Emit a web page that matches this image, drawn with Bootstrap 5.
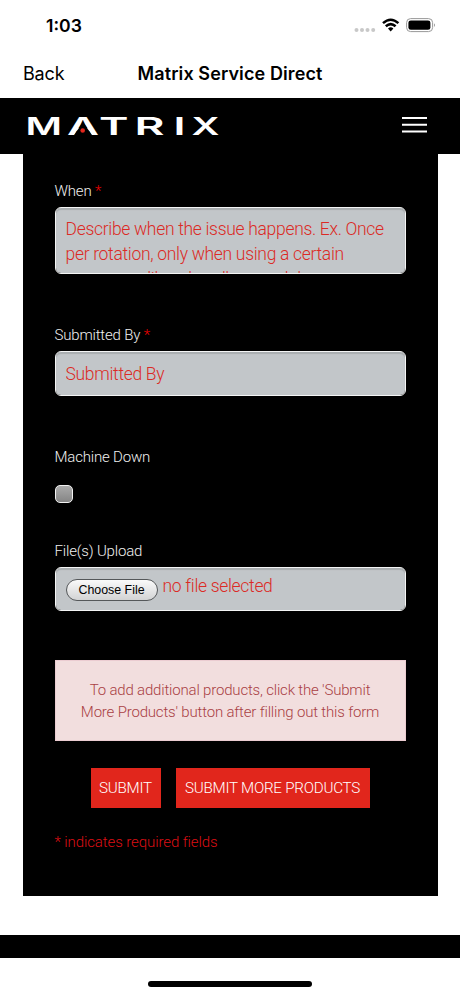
<!DOCTYPE html>
<html lang="en">

<head>
  <meta charset="utf-8">
  <meta name="viewport" content="width=device-width, initial-scale=1">
  <title>Matrix Service Direct</title>

  <!--Bootstrap CSS Link-->
  <link href="https://cdn.jsdelivr.net/npm/bootstrap@5.3.0/dist/css/bootstrap.min.css" rel="stylesheet">

  <style>
    body {
      font-family: Roboto, "Liberation Sans", sans-serif;
      font-weight: 300;
      font-size: 15px;
      line-height: 22px;
      letter-spacing: -0.18px;
      height: 996px;
      overflow: hidden;
      background-color: #fff;
    }

    .status-bar {
      height: 50px;
      padding: 2px 24px 0 46px;
      font: 600 17.6px/1 Inter, sans-serif;
      letter-spacing: 0;
      color: #000;
    }

    .title-bar {
      display: grid;
      grid-template-columns: 1fr auto 1fr;
      height: 48px;
      padding: 0 23px;
      font: 400 18px/1 Inter, sans-serif;
      color: #000;
    }

    .title-bar h1 {
      font-size: 18px;
      font-weight: 600;
      letter-spacing: 0.1px;
    }

    .site-nav {
      height: 55.5px;
      padding: 0 33px 0 25px;
      background-color: #000;
    }

    .brand-text {
      font-family: Inter, sans-serif;
      font-weight: 600;
      font-size: 24px;
      letter-spacing: 0;
    }

    .form-panel {
      width: 415px;
      height: 742px;
      margin: 0 auto 0 22.5px;
      padding: 26.5px 32px 0;
      background-color: #000;
      color: #f0f0f0;
    }

    .form-panel .form-label {
      display: block;
      height: 22px;
      margin: 0 0 5px;
    }

    .required {
      color: #f00000;
    }

    .service-input,
    .service-input:focus {
      padding: 9px 10px;
      border: 1.5px solid #f4f5f5;
      border-radius: 6px;
      background-color: #c2c6c9;
      box-shadow: inset 0 2px 1px #a9adb0;
      color: #dc2a25;
      font-weight: 300;
      font-size: 17.5px;
      line-height: 24.8px;
      letter-spacing: -0.31px;
    }

    .service-input::placeholder {
      color: #dc2a25;
      opacity: 1;
    }

    #when {
      height: 67px;
      margin-bottom: 50px;
      padding-right: 0;
      line-height: 25.2px;
      resize: none;
      overflow: hidden;
    }

    #submitted-by {
      height: 45px;
      margin-bottom: 50px;
    }

    .down-check {
      display: block;
      appearance: none;
      width: 18px;
      height: 18px;
      margin: 17px 0 37px;
      border: 1.5px solid #f2f2f2;
      border-radius: 5px;
      background: linear-gradient(#aaa, #858585);
    }

    .file-field {
      height: 43.5px;
      margin-bottom: 49.5px;
      gap: 5px;
    }

    .choose-btn {
      width: 92px;
      height: 22px;
      margin-top: 2px;
      padding: 0;
      border: 1px solid #55585a;
      border-radius: 11px;
      background: linear-gradient(#fafafa, #d2d3d4);
      color: #000;
      font: 400 12.4px/20px "Liberation Sans", sans-serif;
      letter-spacing: 0;
    }

    .file-text {
      margin-top: -3px;
    }

    .notice {
      height: 81px;
      margin-bottom: 27px;
      border: 1px solid #ebccd1;
      border-radius: 0;
      background-color: #f2dede;
      color: #a94044;
    }

    .submit-btn,
    .submit-btn:hover {
      height: 40px;
      padding: 0;
      border: 0;
      border-radius: 0;
      background-color: #e1261c;
      color: #fff;
      font-weight: 300;
      font-size: 15.2px;
      letter-spacing: -0.25px;
    }

    .single-btn {
      width: 70px;
      margin-right: 15px;
    }

    .more-btn {
      width: 194px;
    }

    .required-note {
      margin: 23px 0 0;
      color: #dc0f14;
      letter-spacing: -0.1px;
    }

    .site-footer {
      height: 23.5px;
      margin-top: 39px;
      background-color: #000;
    }

    .home-bar {
      width: 164px;
      height: 5.5px;
      margin: 23px 0 0 148px;
      border-radius: 3px;
      background-color: #000;
    }
  </style>
</head>

<body>
  <div class="status-bar d-flex align-items-center justify-content-between">
    <span>1:03</span>
    <svg width="83" height="18" viewBox="0 0 83 18" aria-hidden="true">
      <g fill="#c8c8c8">
        <circle cx="3.5" cy="13" r="2"/>
        <circle cx="9" cy="13" r="2"/>
        <circle cx="14.5" cy="13" r="2"/>
        <circle cx="20.2" cy="13" r="2"/>
      </g>
      <g fill="none" stroke="#000" stroke-width="2.5">
        <path d="M30 6.2Q37.7-.8 45.4 6.2"/>
        <path d="M32.8 9.3Q37.7 4.9 42.6 9.3"/>
      </g>
      <path d="M35 11.4Q37.7 9.2 40.4 11.4L37.7 14.4Z"/>
      <rect x="53.6" y="1.6" width="26" height="13" rx="4" fill="none" stroke="#999"/>
      <rect x="55.4" y="3.4" width="22" height="9.4" rx="2.4"/>
      <path d="M81 6.3Q83 8.1 81 9.9Z" fill="#999"/>
    </svg>
  </div>

  <div class="title-bar align-items-center">
    <span>Back</span>
    <h1 class="m-0">Matrix Service Direct</h1>
  </div>

  <nav class="site-nav d-flex align-items-center justify-content-between">
    <svg width="204" height="44" viewBox="-3 0 204 44" role="img" aria-label="Matrix">
      <g class="brand-text" fill="#fff">
        <text x="-2.5" y="31" textLength="36.5" lengthAdjust="spacingAndGlyphs">M</text>
        <text x="39" y="31" textLength="32" lengthAdjust="spacingAndGlyphs">A</text>
        <text x="71" y="31" textLength="29.5" lengthAdjust="spacingAndGlyphs">T</text>
        <text x="106.5" y="31" textLength="30" lengthAdjust="spacingAndGlyphs">R</text>
        <text x="145.5" y="31" textLength="12" lengthAdjust="spacingAndGlyphs">I</text>
        <text x="163.5" y="31" textLength="28" lengthAdjust="spacingAndGlyphs">X</text>
      </g>
      <!-- hide the crossbar of the A and put the red dot there -->
      <path d="M55 18L64.5 32H45.5Z"/>
      <circle cx="54.7" cy="26.5" r="2.3" fill="#e1261c"/>
    </svg>
    <svg width="25" height="19" viewBox="0 0 25 19" aria-hidden="true">
      <path d="M0 2H25M0 8.8H25M0 15.6H25" stroke="#fff" stroke-width="2"/>
    </svg>
  </nav>

  <form class="form-panel">
    <label class="form-label" for="when">When <span class="required">*</span></label>
    <textarea class="form-control service-input" id="when" placeholder="Describe when the issue happens. Ex. Once&#10;per rotation, only when using a certain&#10;accessory, like a handle or pedal"></textarea>

    <label class="form-label" for="submitted-by">Submitted By <span class="required">*</span></label>
    <input class="form-control service-input" id="submitted-by" type="text" placeholder="Submitted By">

    <label class="form-label" for="machine-down">Machine Down</label>
    <input class="down-check" id="machine-down" type="checkbox">

    <label class="form-label">File(s) Upload</label>
    <div class="form-control service-input file-field d-flex align-items-start">
      <button class="choose-btn flex-shrink-0" type="button">Choose File</button>
      <span class="file-text">no file selected</span>
    </div>

    <div class="notice d-flex align-items-center justify-content-center text-center">
      <div>To add additional products, click the 'Submit<br>More Products' button after filling out this form</div>
    </div>

    <div class="d-flex justify-content-center">
      <button class="btn submit-btn single-btn" type="button">SUBMIT</button>
      <button class="btn submit-btn more-btn" type="button">SUBMIT MORE PRODUCTS</button>
    </div>

    <p class="required-note">* indicates required fields</p>
  </form>

  <footer class="site-footer"></footer>
  <div class="home-bar"></div>

  <script src="https://cdn.jsdelivr.net/npm/bootstrap@5.3.0/dist/js/bootstrap.bundle.min.js"></script>
</body>

</html>
